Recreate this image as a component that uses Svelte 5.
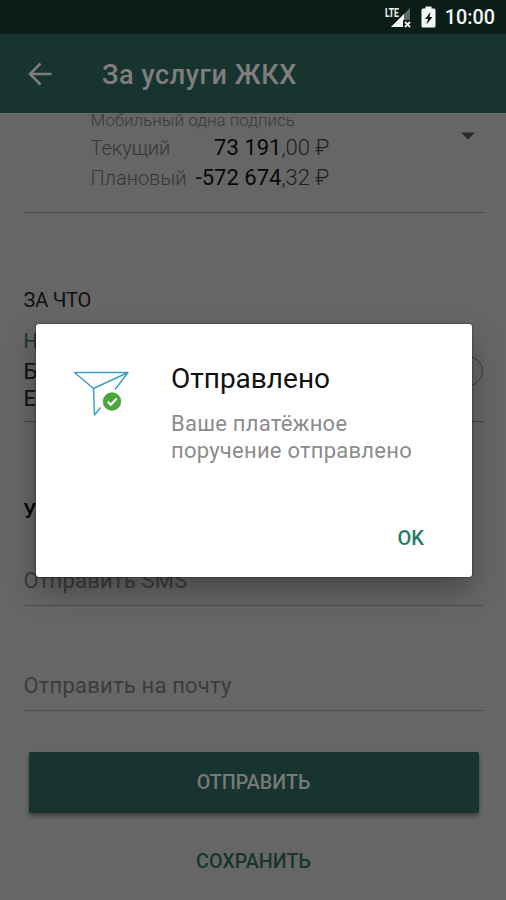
<script>
  const accounts = [
    { label: 'Текущий', whole: '73 191', cents: ',00 ₽' },
    { label: 'Плановый', whole: '-572 674', cents: ',32 ₽' }
  ];
</script>

<div class="screen">
  <div class="status">
    <svg width="28" height="24" viewBox="0 0 28 24">
      <path d="M25 3V22H6Z" fill="#5e6a67" />
      <path d="M19 9V22H6Z" fill="#f4f6f5" />
      <path d="M18 15h8v8h-8z" fill="#0b1d19" />
      <path d="M20 17l5 5m0-5l-5 5" stroke="#f4f6f5" stroke-width="1.800" />
      <text x="0" y="12" font-size="12" textLength="14" lengthAdjust="spacingAndGlyphs">LTE</text>
    </svg>
    <svg class="battery" width="15" height="22" viewBox="0 0 15 22">
      <path d="M4.500 0.500h6v2H13q1.500 0 1.500 1.500V20q0 1.500-1.500 1.500H2Q.5 21.500.5 20V4Q.5 2.500 2 2.500h2.500z" fill="#f6f7f7" />
      <path d="M9.500 6L4 13h3l-1.500 5.500L11.500 11h-3z" fill="#0b1d19" />
    </svg>
    <span class="clock">10:00</span>
  </div>

  <header>
    <svg class="back" width="24" height="24" viewBox="0 0 24 24" fill="none" stroke="#807d7f" stroke-width="2.500">
      <path d="M23.500 12H2.500M12.500 1.500L2 12l10.500 10.500" />
    </svg>
    <h1>За услуги ЖКХ</h1>
  </header>

  <main>
    <section class="account">
      <div class="details">
        <div class="owner">Мобильный одна подпись</div>
        {#each accounts as row}
          <div class="row">
            <span class="label">{row.label}</span>
            <span class="amount"><b>{row.whole}</b>{row.cents}</span>
          </div>
        {/each}
      </div>
      <svg class="caret" width="14" height="8" viewBox="0 0 14 8"><path d="M0 .5h14L7 7.500z" fill="#2b2b2b" /></svg>
    </section>

    <h2 class="what">ЗА ЧТО</h2>
    <section class="purpose">
      <div>
        <div class="caption">Н</div>
        <div class="value">Б</div>
        <div class="value">Е</div>
      </div>
      <span class="info"></span>
    </section>

    <h2 class="notify">У</h2>
    <div class="field sms">Отправить SMS</div>
    <div class="field mail">Отправить на почту</div>
    <button class="send">ОТПРАВИТЬ</button>
    <button class="save">СОХРАНИТЬ</button>
  </main>

  <div class="dialog" role="dialog">
    <svg class="plane" width="58" height="50" viewBox="0 0 58 50" fill="none">
      <path d="M20.500 19.500L1.500 3.500H55L20.500 19.500L21.500 46L27.500 38.500M55 3.500L42 20.500" stroke="#3d9fc6" stroke-width="1.500" stroke-linejoin="round" />
      <circle cx="39" cy="32.500" r="9.200" fill="#4ba63c" />
      <path d="M34.700 32.800l3 3 6-6.200" stroke="#fff" stroke-width="2.100" />
    </svg>
    <div class="message">
      <h3>Отправлено</h3>
      <p>Ваше платёжное<br />поручение отправлено</p>
      <button class="ok">OK</button>
    </div>
  </div>
</div>

<style>
  :global(body) { margin: 0; }
  .screen {
    position: relative;
    width: 506px;
    height: 900px;
    overflow: hidden;
    background: #666;
    font-family: Roboto, 'Noto Sans', sans-serif;
    color: #111;
  }
  h1, h2, h3, p { margin: 0; font-weight: 400; }
  button { display: block; border: 0; padding: 0; background: none; font: inherit; }
  svg { display: block; flex: none; }
  .status {
    display: flex;
    align-items: center;
    justify-content: flex-end;
    height: 34px;
    padding-right: 11px;
    box-sizing: border-box;
    background: #0b1d19;
    color: #f4f6f5;
  }
  .status text { fill: #f4f6f5; font-weight: 700; }
  .battery { margin: 0 9px 0 8px; }
  .clock { font-size: 19.800px; font-weight: 500; line-height: 36px; padding-top: 2px; }
  header {
    display: flex;
    align-items: center;
    height: 78.500px;
    padding-left: 28px;
    background: #17352e;
  }
  h1 { margin: 3px 0 0 50px; font-size: 27px; letter-spacing: 0.580px; font-weight: 500; color: #807d7f; }
  .back { margin-top: 1px; }
  main { padding: 0 22px 0 23.500px; }
  .account {
    display: flex;
    justify-content: space-between;
    height: 100px;
    border-bottom: 1px solid #484949;
    box-sizing: border-box;
    padding-left: 67px;
  }
  .details { width: 239px; font-size: 22px; font-weight: 300; }
  .owner { height: 20px; line-height: 15px; font-size: 17px; white-space: nowrap; color: #3a3a3a; }
  .row { display: flex; justify-content: space-between; line-height: 30px; white-space: nowrap; color: #363636; }
  .label { font-size: 20px; }
  .amount { color: #202020; }
  .amount b { font-weight: 400; color: #080808; }
  .caret { margin: 19px 9px 0 0; }
  h2 { font-size: 20px; line-height: 24px; color: #111; }
  .what { margin-top: 75px; letter-spacing: -0.200px; }
  .purpose {
    display: flex;
    justify-content: space-between;
    margin-top: 17px;
    height: 93px;
    border-bottom: 1px solid #424343;
    box-sizing: border-box;
  }
  .caption { font-size: 20px; line-height: 24px; color: #17352e; }
  .value { font-size: 22px; line-height: 27px; }
  .caption + .value { padding-top: 5px; }
  .info { width: 30px; height: 30px; margin: 27px 1px 0 0; border: 1.500px solid #383939; border-radius: 50%; box-sizing: border-box; }
  .notify { margin-top: 77px; font-weight: 500; color: #050505; }
  .field { font-size: 22px; letter-spacing: 0.200px; line-height: 30px; color: #3c3c3c; border-bottom: 1px solid #505050; }
  .sms { margin-top: 43px; padding-bottom: 9px; }
  .mail { margin-top: 65px; padding-bottom: 9px; }
  .send {
    width: 450px;
    height: 61px;
    margin: 41px 0 0 5px;
    border-radius: 2px;
    background: #17352e;
    box-shadow: 0 3px 4px rgba(0, 0, 0, 0.4);
    color: #777978;
    font-size: 19.700px;
    font-weight: 500;
  }
  .save { width: 450px; margin: 37px 0 0 5px; line-height: 24px; font-size: 19.700px; font-weight: 500; color: #17352e; }
  .dialog {
    position: absolute;
    left: 36px;
    top: 323.500px;
    width: 436px;
    height: 253px;
    display: flex;
    box-sizing: border-box;
    padding: 45px 48px 0 37px;
    border-radius: 3px;
    background: #fff;
    box-shadow: 0 0 2px rgba(0, 0, 0, 0.7), 0 14px 30px rgba(0, 0, 0, 0.3);
  }
  .message { flex: 1; margin-left: 40px; display: flex; flex-direction: column; white-space: nowrap; }
  h3 { margin-top: -8px; font-size: 28px; line-height: 36px; }
  p { margin-top: 13px; font-size: 22px; letter-spacing: 0.240px; line-height: 27px; color: #8c8c8c; }
  .ok { align-self: flex-end; margin-top: 62px; line-height: 24px; font-size: 20px; font-weight: 500; color: #267c64; }
</style>
